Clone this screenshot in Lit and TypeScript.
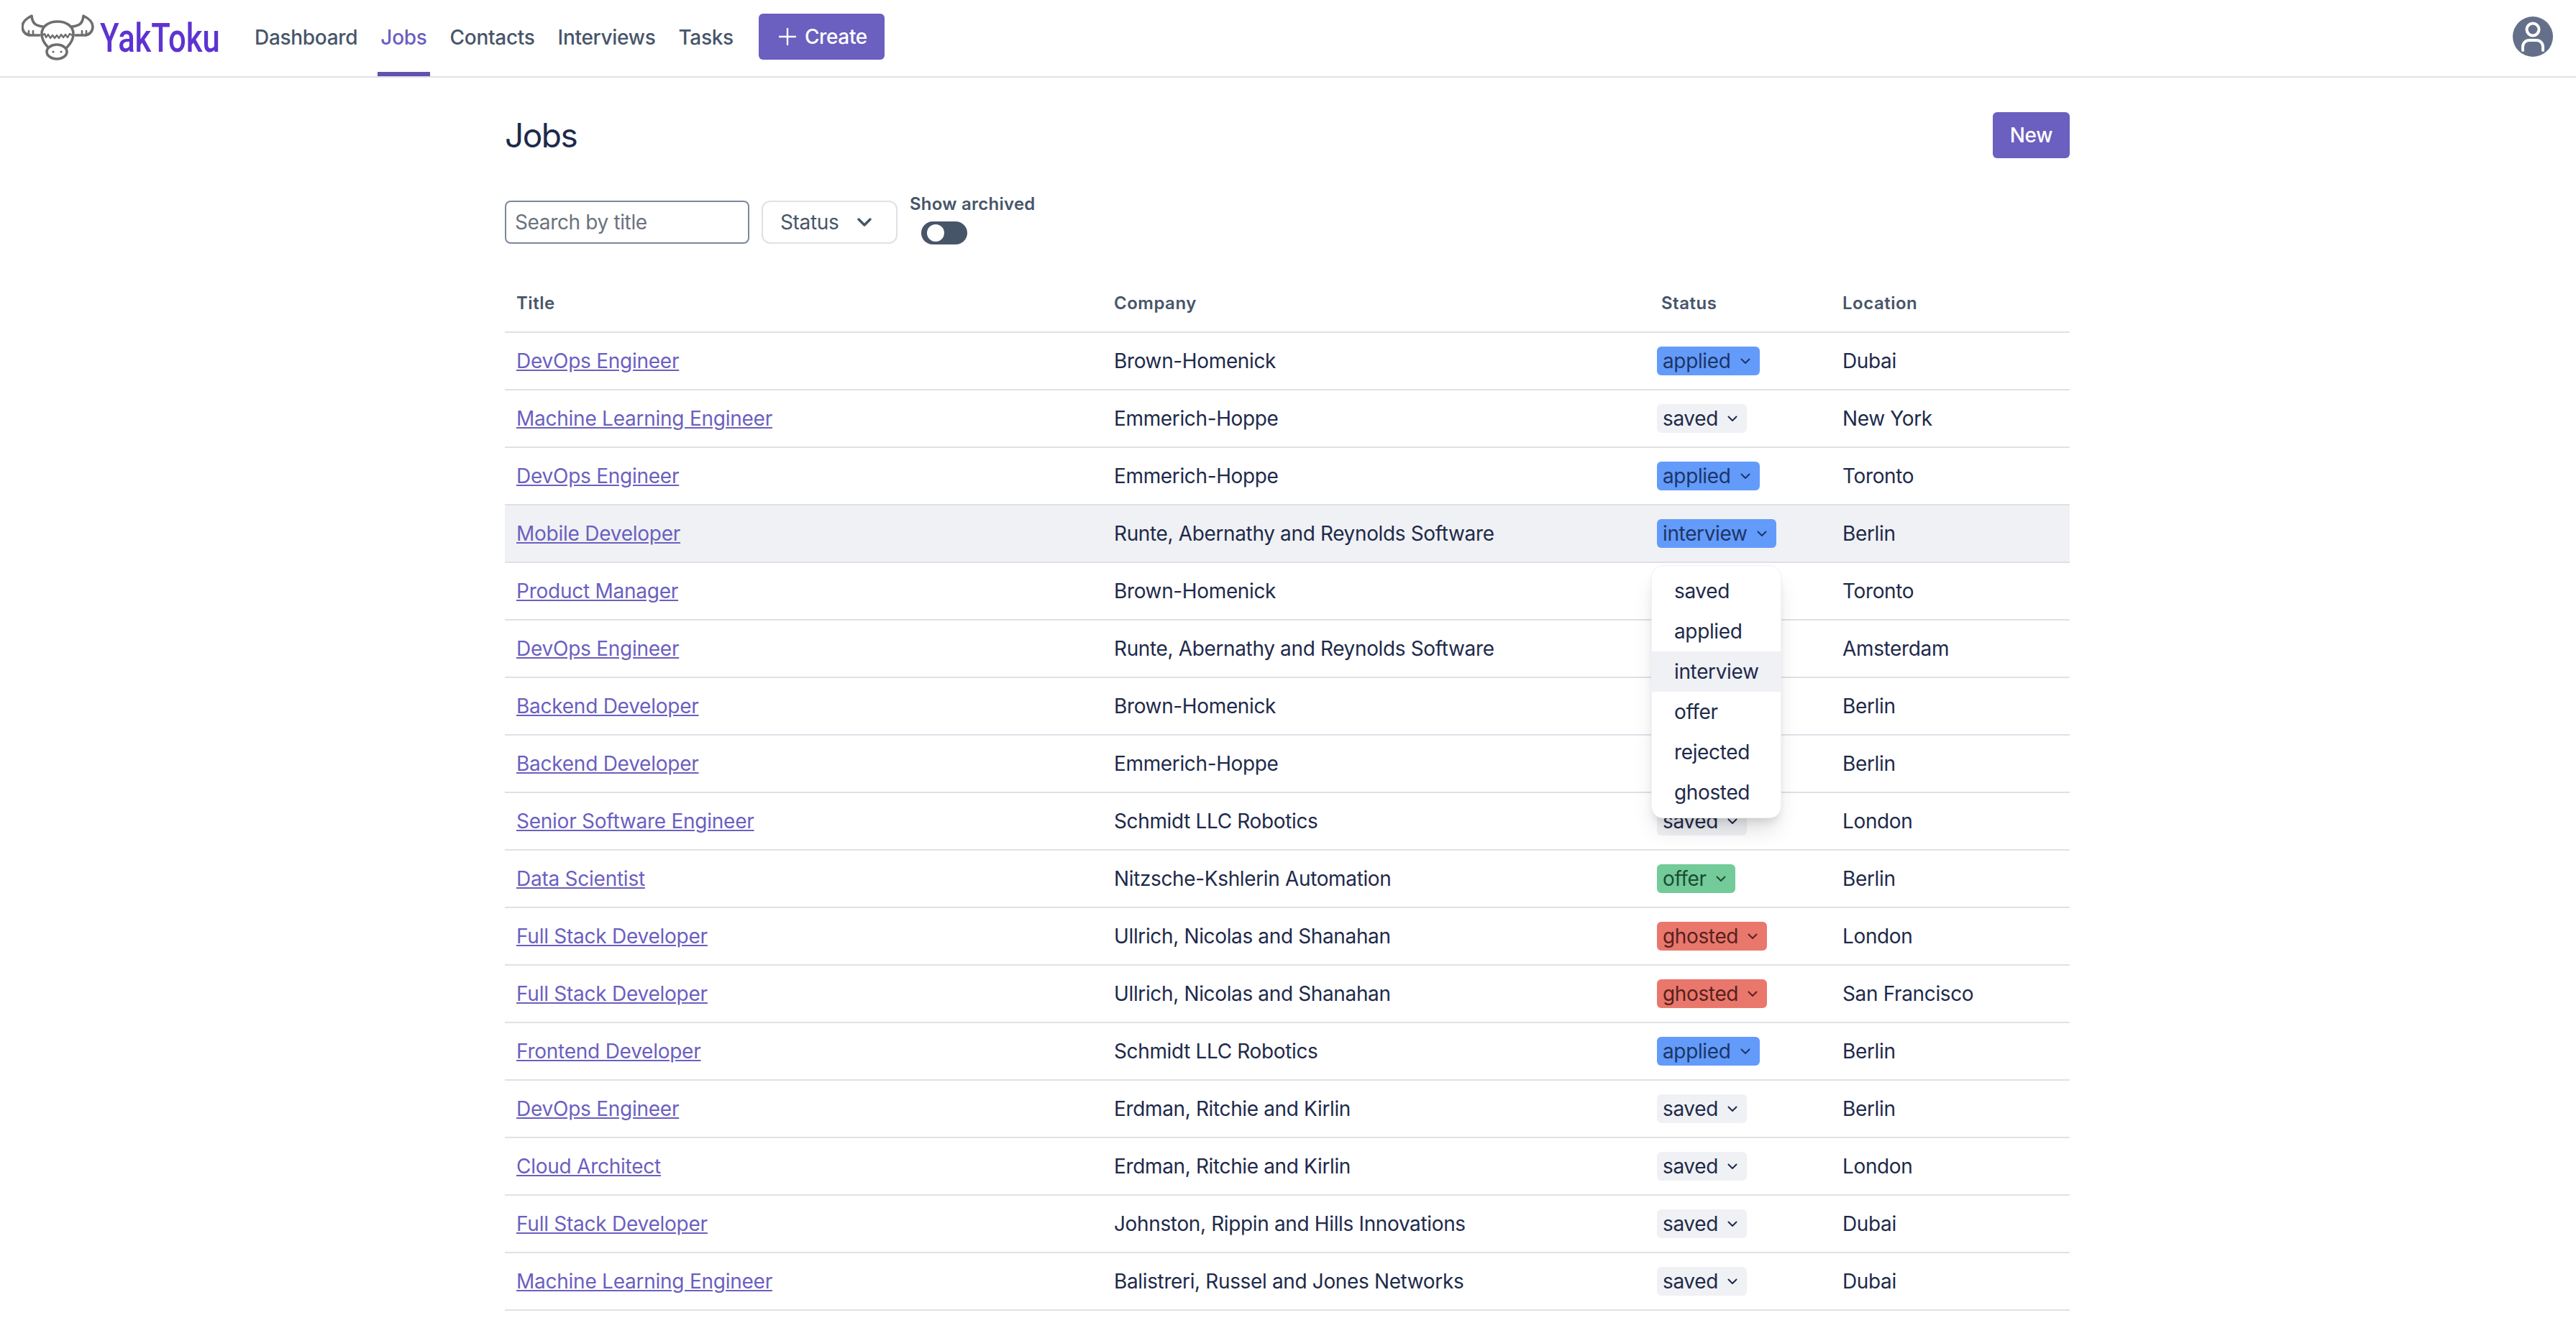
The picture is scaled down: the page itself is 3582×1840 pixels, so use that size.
import { LitElement, html, css, svg } from "lit";
import { customElement } from "lit/decorators.js";

const rows: [string, string, string, string][] = [
  ["DevOps Engineer", "Brown-Homenick", "applied", "Dubai"],
  ["Machine Learning Engineer", "Emmerich-Hoppe", "saved", "New York"],
  ["DevOps Engineer", "Emmerich-Hoppe", "applied", "Toronto"],
  ["Mobile Developer", "Runte, Abernathy and Reynolds Software", "interview", "Berlin"],
  ["Product Manager", "Brown-Homenick", "saved", "Toronto"],
  ["DevOps Engineer", "Runte, Abernathy and Reynolds Software", "saved", "Amsterdam"],
  ["Backend Developer", "Brown-Homenick", "saved", "Berlin"],
  ["Backend Developer", "Emmerich-Hoppe", "saved", "Berlin"],
  ["Senior Software Engineer", "Schmidt LLC Robotics", "saved", "London"],
  ["Data Scientist", "Nitzsche-Kshlerin Automation", "offer", "Berlin"],
  ["Full Stack Developer", "Ullrich, Nicolas and Shanahan", "ghosted", "London"],
  ["Full Stack Developer", "Ullrich, Nicolas and Shanahan", "ghosted", "San Francisco"],
  ["Frontend Developer", "Schmidt LLC Robotics", "applied", "Berlin"],
  ["DevOps Engineer", "Erdman, Ritchie and Kirlin", "saved", "Berlin"],
  ["Cloud Architect", "Erdman, Ritchie and Kirlin", "saved", "London"],
  ["Full Stack Developer", "Johnston, Rippin and Hills Innovations", "saved", "Dubai"],
  ["Machine Learning Engineer", "Balistreri, Russel and Jones Networks", "saved", "Dubai"],
];
const options = ["saved", "applied", "interview", "offer", "rejected", "ghosted"];
const links = ["Dashboard", "Jobs", "Contacts", "Interviews", "Tasks"];

const chevron = svg`<path d="M6.5 9.5 12 15l5.5-5.5" fill="none" stroke="currentColor" stroke-width="2" stroke-linecap="round" stroke-linejoin="round"/>`;

@customElement("app-root")
export class AppRoot extends LitElement {
  static styles = css`
    :host { display: block; font-family: Inter, "Noto Sans", sans-serif; font-size: 28px; line-height: 40px; letter-spacing: -0.36px; color: #1e2a4a; background: #fff; min-height: 1840px; }
    * { box-sizing: border-box; }
    .nav { height: 108px; border-bottom: 2px solid #e0e0e8; display: flex; align-items: stretch; padding-left: 30px; padding-right: 32px; }
    .brand { display: flex; align-items: center; width: 320px; flex: none; }
    .brand svg { display: block; flex: none; margin-top: -2px; }
    .word { font-family: Roboto, sans-serif; font-weight: 500; font-size: 56px; line-height: 60px; letter-spacing: 0; color: #5d33d1; display: inline-block; transform: scaleX(.778); transform-origin: left center; margin-left: 7px; margin-top: -1px; }
    .links { display: flex; gap: 24px; align-items: stretch; }
    .link { padding: 0 4px; font-weight: 500; letter-spacing: -0.3px; color: #475569; display: flex; align-items: center; height: 106px; border-bottom: 6px solid transparent; padding-top: 4px; }
    .link.active { color: #6b5fbf; border-bottom-color: #5f52b0; }
    .create { margin-left: 31px; align-self: flex-start; margin-top: 19px; padding: 0 25px; }
    .btn { height: 64px; background: #6b5fbf; color: #fff; border-radius: 6px; font-weight: 500; display: inline-flex; align-items: center; padding: 0 24px; gap: 8px; }
    .btn svg { display: block; }
    .avatar { margin-left: auto; align-self: center; display: block; margin-bottom: 4px; }
    main { width: 2304px; margin-left: 638px; padding: 48px 64px 0; }
    .head { display: flex; justify-content: space-between; align-items: center; height: 64px; }
    h1 { margin: 0; font-size: 46px; line-height: 56px; letter-spacing: -1.5px; font-weight: 400; color: #1e2a4a; }
    .filters { display: flex; align-items: flex-end; gap: 16px; margin-top: 48px; height: 72px; }
    .search { width: 340px; height: 60px; border: 2px solid #7d879c; border-radius: 8px; padding: 0 12px; display: flex; align-items: center; color: #6b7280; margin-bottom: 1px; }
    .select { width: 189px; height: 60px; margin-left: 1px; border: 2px solid #e0e0e8; border-radius: 12px; padding: 0 24px; display: flex; align-items: center; justify-content: space-between; color: #475569; margin-bottom: 1px; }
    .select svg { display: block; margin-right: 4px; }
    .archived { display: flex; flex-direction: column; align-items: flex-start; margin-left: 1px; }
    .archived span { font-size: 24px; line-height: 32px; font-weight: 600; letter-spacing: 0.25px; color: #475569; }
    .toggle { width: 64px; height: 32px; border-radius: 16px; background: #475569; margin: 8px 0 0 16px; padding: 4px 8px; }
    .toggle i { display: block; width: 24px; height: 24px; border-radius: 50%; background: #fff; }
    table { width: 100%; border-collapse: separate; border-spacing: 0; table-layout: fixed; margin-top: 40px; }
    th { height: 83px; padding: 3px 16px 0; text-align: left; font-size: 24px; line-height: 32px; font-weight: 600; letter-spacing: 0.5px; color: #475569; border-bottom: 2px solid #e0e0e8; }
    td { height: 80px; padding: 0 16px; border-bottom: 2px solid #e0e0e8; white-space: nowrap; }
    tr.hover td { background: #f0f1f4; }
    a { color: #6b5fbf; text-decoration: underline; letter-spacing: -0.25px; }
    td.st { padding-left: 10px; }
    .chip { position: relative; display: flex; width: fit-content; align-items: center; height: 40px; border-radius: 6px; padding: 0 8px; gap: 8px; }
    .chip svg { display: block; }
    .saved { background: #f0f1f4; color: #1e2a4a; }
    .applied, .interview { background: #639bfa; color: #1d3566; }
    .offer { background: #72cb98; color: #1d4a35; }
    .ghosted { background: #e9776c; color: #57211e; }
    .menu { position: absolute; left: -8px; top: 64px; width: 181px; padding: 7px 0; background: #fff; border-radius: 16px; z-index: 5; color: #1e2a4a;
      border: 1px solid #f0f1f4; box-shadow: 0 20px 30px -6px rgba(0,0,0,.14), 0 8px 12px -4px rgba(0,0,0,.1); }
    .menu div { height: 56px; padding: 0 31px; display: flex; align-items: center; }
    .menu div.on { background: #f0f1f4; }
  `;

  chip(s: string, open: boolean) {
    return html`<span class="chip ${s}">${s}<svg width="24" height="24" viewBox="0 0 24 24">${chevron}</svg>
      ${open ? html`<div class="menu">${options.map((o) => html`<div class=${o === "interview" ? "on" : ""}>${o}</div>`)}</div>` : ""}</span>`;
  }

  render() {
    return html`
      <header class="nav">
        <div class="brand">
          <svg width="102" height="64" viewBox="30 20 102 64" fill="none" stroke="#6e6e6e" stroke-width="3.6" stroke-linejoin="round" stroke-linecap="round">
            <path d="M60 37C51 36 45 34 44 22C36 26 31 31 31 37C31 44 36 49 43 49H55"/>
            <path d="M100 37C109 36 115 34 116 22C124 26 129 31 129 37C129 44 124 49 117 49H105"/>
            <path d="M40 43v6M46 43v6M120 43v6M114 43v6" stroke-width="2.6"/>
            <path d="M67 66C61 60 58 55 58 47C58 37 67 30 80 30C93 30 102 37 102 47C102 55 99 60 93 66"/>
            <path d="M58 50 62 47 64 52 67 48 70 53 73 49 76 53 79 49 82 53 85 48 88 52 91 48 94 52 97 47 102 50" stroke-width="2.4"/>
            <ellipse cx="79" cy="72" rx="14" ry="10"/>
            <circle cx="74" cy="72" r="1.6" fill="#6e6e6e" stroke="none"/>
            <circle cx="85" cy="72" r="1.6" fill="#6e6e6e" stroke="none"/>
          </svg>
          <span class="word">YakToku</span>
        </div>
        <nav class="links">
          ${links.map((l) => html`<span class="link ${l === "Jobs" ? "active" : ""}">${l}</span>`)}
        </nav>
        <span class="btn create">
          <svg width="32" height="32" viewBox="0 0 32 32"><path d="M16 5v22M5 16h22" stroke="#fff" stroke-width="2.4" stroke-linecap="round"/></svg>Create
        </span>
        <svg class="avatar" width="56" height="56" viewBox="0 0 56 56">
          <circle cx="28" cy="28" r="28" fill="#64708a"/>
          <circle cx="28" cy="18" r="8.5" fill="none" stroke="#fff" stroke-width="4"/>
          <path d="M14 47V42C14 37 18 33 23 33H33C38 33 42 37 42 42V47" fill="none" stroke="#fff" stroke-width="4" stroke-linecap="round"/>
        </svg>
      </header>
      <main>
        <div class="head"><h1>Jobs</h1><span class="btn">New</span></div>
        <div class="filters">
          <div class="search">Search by title</div>
          <div class="select">Status<svg width="32" height="32" viewBox="0 0 24 24"><path d="M6 9l6 6 6-6" fill="none" stroke="currentColor" stroke-width="2.6" stroke-linecap="round" stroke-linejoin="round"/></svg></div>
          <div class="archived"><span>Show archived</span><div class="toggle"><i></i></div></div>
        </div>
        <table>
          <colgroup><col style="width:831px"/><col style="width:761px"/><col style="width:252px"/><col/></colgroup>
          <thead><tr><th>Title</th><th>Company</th><th>Status</th><th>Location</th></tr></thead>
          <tbody>
            ${rows.map((r, i) => html`<tr class=${i === 3 ? "hover" : ""}>
              <td><a href="#">${r[0]}</a></td><td>${r[1]}</td>
              <td class="st">${this.chip(r[2], i === 3)}</td><td>${r[3]}</td></tr>`)}
          </tbody>
        </table>
      </main>`;
  }
}
